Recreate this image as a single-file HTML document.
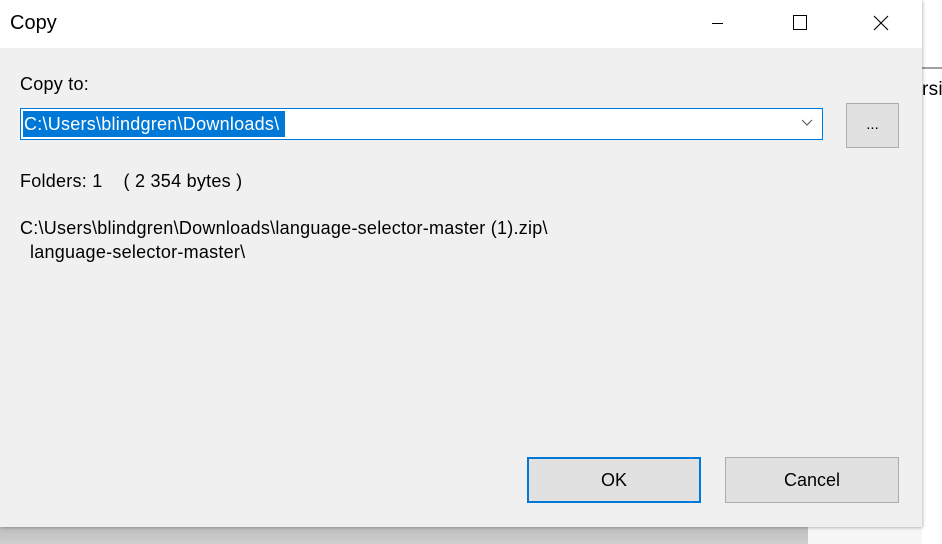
<!DOCTYPE html>
<html><head><style>
*{margin:0;padding:0;box-sizing:border-box}
body{width:942px;height:544px;position:relative;overflow:hidden;background:#f7f7f7;font-family:"Liberation Sans",sans-serif;color:#000}
.abs{position:absolute}
.t{font-size:18px;letter-spacing:0.25px;white-space:nowrap}
</style></head><body>
<div class="abs" style="left:922px;top:0;width:20px;height:544px;background:#fff"></div>
<div class="abs" style="left:922px;top:67px;width:20px;height:2px;background:#a0a0a0"></div>
<div class="abs t" style="left:922px;top:79px;overflow:hidden;width:20px;font-size:19px">rsic</div>
<div class="abs" style="left:0;top:527px;width:808px;height:17px;background:linear-gradient(#bdbdbd,#cfcfcf)"></div>
<div class="abs" style="left:0;top:0;width:922px;height:527px;background:#f0f0f0;box-shadow:1px 1px 3px rgba(0,0,0,.25)"></div>
<div class="abs" style="left:0;top:0;width:922px;height:48px;background:#fff"></div>
<div class="abs" style="left:10px;top:12px;font-size:20px">Copy</div>
<div class="abs" style="left:712px;top:23px;width:11px;height:1px;background:#000"></div>
<div class="abs" style="left:793px;top:15px;width:14px;height:15px;border:1px solid #000"></div>
<svg class="abs" style="left:873px;top:15px" width="16" height="16"><path d="M1 1L15 15M15 1L1 15" stroke="#000" stroke-width="1.1"/></svg>
<div class="abs t" style="left:20px;top:74px">Copy to:</div>
<div class="abs" style="left:20px;top:108px;width:803px;height:32px;background:#fff;border:1px solid #0078d7"></div>
<div class="abs t" style="left:23px;top:111px;height:26px;width:262px;background:#0078d7;color:#fff;line-height:26px;padding-left:1px;overflow:hidden">C:\Users\blindgren\Downloads\</div>
<svg class="abs" style="left:801px;top:119px" width="12" height="8"><path d="M1 1L6 6L11 1" stroke="#555" fill="none"/></svg>
<div class="abs" style="left:846px;top:103px;width:53px;height:45px;background:#e1e1e1;border:1px solid #adadad;text-align:center;line-height:42px;font-size:15px">...</div>
<div class="abs t" style="left:20px;top:171px">Folders: 1&nbsp;&nbsp;&nbsp;&nbsp;( 2 354 bytes )</div>
<div class="abs t" style="left:20px;top:218px">C:\Users\blindgren\Downloads\language-selector-master (1).zip\</div>
<div class="abs t" style="left:30px;top:242px">language-selector-master\</div>
<div class="abs" style="left:527px;top:457px;width:174px;height:46px;background:#e1e1e1;border:2px solid #0078d7;text-align:center;line-height:42px;font-size:18px">OK</div>
<div class="abs" style="left:725px;top:457px;width:174px;height:46px;background:#e1e1e1;border:1px solid #adadad;text-align:center;line-height:44px;font-size:18px">Cancel</div>
</body></html>
